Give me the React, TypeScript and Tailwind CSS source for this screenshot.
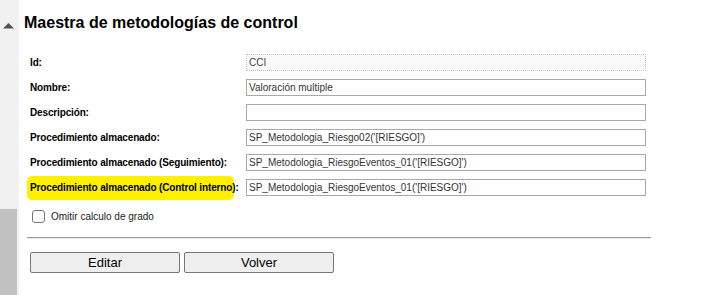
import React from "react";

const rows: { label: string; value: string; id?: boolean; hl?: boolean }[] = [
  { label: "Id:", value: "CCI", id: true },
  { label: "Nombre:", value: "Valoración multiple" },
  { label: "Descripción:", value: "" },
  { label: "Procedimiento almacenado:", value: "SP_Metodologia_Riesgo02('[RIESGO]')" },
  { label: "Procedimiento almacenado (Seguimiento):", value: "SP_Metodologia_RiesgoEventos_01('[RIESGO]')" },
  { label: "Procedimiento almacenado (Control interno):", value: "SP_Metodologia_RiesgoEventos_01('[RIESGO]')", hl: true },
];

export default function App() {
  return (
    <div className="w-[718px] h-[295px] flex bg-white overflow-hidden font-['Liberation_Sans',Arial,sans-serif] text-black">
      <div className="w-[19px] h-full bg-[#f1f1f1] flex flex-col">
        <div className="h-[23px]" />
        <svg width="19" height="6" viewBox="0 0 19 6" className="block">
          <polygon points="3,5.5 8.5,0 14,5.5" fill="#505050" />
        </svg>
        <div className="flex-1" />
        <div className="w-[17px] h-[86px] bg-[#c1c1c1]" />
      </div>
      <div className="flex-1 pl-[5px]">
        <h1 className="text-[16px] font-bold leading-[18px] pt-[14px] m-0">
          Maestra de metodologías de control
        </h1>
        <div className="pl-[6px] mt-[22px]">
          <div className="grid grid-cols-[216px_400px] gap-y-[8px] items-center">
            {rows.map((r) => (
              <React.Fragment key={r.label}>
                <div className="relative h-[17px] flex items-center">
                  {r.hl && (
                    <div className="absolute left-[-3px] top-[-3px] w-[207px] h-[24px] bg-[#fff000] rounded-[5px]" />
                  )}
                  <span className="relative text-[10px] font-bold leading-[12px] tracking-[-0.15px] whitespace-nowrap">
                    {r.label}
                  </span>
                </div>
                <div
                  className={
                    "h-[17px] w-[400px] flex items-center pl-[2px] text-[10px] leading-[12px] whitespace-nowrap overflow-hidden " +
                    (r.id
                      ? "border border-dotted border-[#c4c4c4] bg-[#f9f9f9] text-[#444]"
                      : "border border-[#a9a9a9] bg-white text-[#333]")
                  }
                >
                  {r.value}
                </div>
              </React.Fragment>
            ))}
          </div>
          <div className="flex items-center mt-[14px] ml-[2px] h-[13px]">
            <div className="w-[13px] h-[13px] rounded-[3px] border border-[#767676] bg-white" />
            <span className="ml-[6px] text-[10px] leading-[12px] text-[#222]">Omitir calculo de grado</span>
          </div>
          <div className="mt-[14px] ml-[-3px] w-[624px] border-t border-[#999999] border-b border-b-[#eeeeee]" />
          <div className="flex gap-[4px] mt-[13px]">
            <button className="w-[150px] h-[21px] border border-[#767676] rounded-[2px] bg-[#efefef] text-[13px] leading-[15px] text-black">
              Editar
            </button>
            <button className="w-[150px] h-[21px] border border-[#767676] rounded-[2px] bg-[#efefef] text-[13px] leading-[15px] text-black">
              Volver
            </button>
          </div>
        </div>
      </div>
    </div>
  );
}
